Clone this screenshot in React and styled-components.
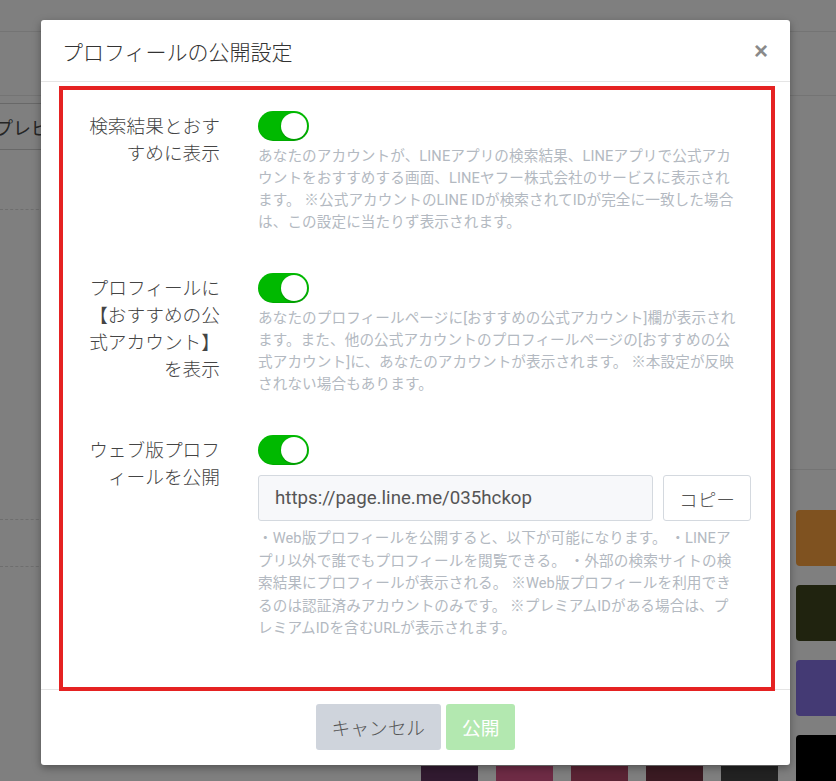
import React from "react";
import styled, { createGlobalStyle } from "styled-components";

const GlobalStyle = createGlobalStyle`
  html, body { margin: 0; padding: 0; }
  body {
    font-family: Roboto, "Noto Sans CJK JP", sans-serif;
    -webkit-font-smoothing: antialiased;
  }
  * { box-sizing: border-box; }
`;

/* ---------- dimmed page behind the modal ---------- */
const Page = styled.div`
  position: relative;
  width: 836px;
  height: 781px;
  overflow: hidden;
  background: #fff;
  display: flex;
  flex-direction: column;
`;
const TopBar = styled.div`
  height: 32px;
  flex-shrink: 0;
  border-bottom: 1px solid #e8e8e8;
`;
const SubBar = styled.div`
  height: 64px;
  flex-shrink: 0;
  border-bottom: 1px solid #e8e8e8;
`;
const Workspace = styled.div`
  flex: 1;
  display: flex;
  min-height: 0;
`;
const LeftCol = styled.div`
  width: 100px;
  flex-shrink: 0;
  padding-top: 7px;
  display: flex;
  flex-direction: column;
`;
const PreviewTab = styled.div`
  height: 47px;
  border-top: 1px solid #d0d0d0;
  border-bottom: 1px solid #d0d0d0;
  display: flex;
  align-items: center;
  margin-left: -5px;
  font-family: "Noto Sans CJK JP", sans-serif;
  font-size: 18px;
  color: #4a4a4a;
  white-space: nowrap;
`;
const DashedBlock = styled.div`
  height: ${(p) => p.$h}px;
  flex-shrink: 0;
  border-bottom: 1px dashed #dcdcdc;
`;
const Center = styled.div`
  flex: 1;
  padding: 670px 0 0 321px;
  display: flex;
  gap: 18px;
`;
const Swatch = styled.div`
  width: 57px;
  height: 40px;
  flex-shrink: 0;
  background: ${(p) => p.$c};
`;
const RightCol = styled.div`
  width: 46px;
  flex-shrink: 0;
  display: flex;
  flex-direction: column;
`;
const RightTop = styled.div`
  height: 374px;
  flex-shrink: 0;
  border-bottom: 1px solid #e8e8e8;
`;
const RightTiles = styled.div`
  padding: 40px 0 0 6px;
  display: flex;
  flex-direction: column;
  gap: 19px;
`;
const Tile = styled.div`
  width: 60px;
  height: 56px;
  flex-shrink: 0;
  border-radius: 4px;
  background: ${(p) => p.$c};
`;

const Backdrop = styled.div`
  position: absolute;
  inset: 0;
  background: rgba(0, 0, 0, 0.5);
`;

/* ---------- modal ---------- */
const Modal = styled.div`
  position: absolute;
  top: 20px;
  left: 41px;
  width: 749px;
  background: #fff;
  border-radius: 3px;
  box-shadow: 0 3px 9px rgba(0, 0, 0, 0.35);
  display: flex;
  flex-direction: column;
`;
const Header = styled.div`
  height: 62px;
  border-bottom: 1px solid #e5e5e5;
  display: flex;
  align-items: center;
  justify-content: space-between;
  padding: 0 22px 0 21px;
`;
const Title = styled.h4`
  margin: 0;
  font-family: "Noto Sans CJK JP", sans-serif;
  font-size: 21px;
  font-weight: 300;
  color: #333;
`;
const Close = styled.button`
  border: 0;
  background: none;
  padding: 0;
  font: 700 24px "Liberation Sans", sans-serif;
  line-height: 1;
  color: #8a8a8a;
  cursor: pointer;
`;
const Body = styled.div`
  padding: 4px 15px 0 18px;
  margin-bottom: -2px;
  position: relative;
  z-index: 1;
`;
const Frame = styled.div`
  border: 4px solid #e52222;
  padding: 21px 20px 47px 0;
  display: flex;
  flex-direction: column;
  gap: 40px;
`;
const Row = styled.div`
  display: grid;
  grid-template-columns: 157px 1fr;
  column-gap: 38px;
  align-items: start;
`;
const Label = styled.div`
  font-family: "Noto Sans CJK JP", sans-serif;
  font-size: 18.7px;
  font-weight: 300;
  line-height: 27px;
  color: #444;
  text-align: right;
  white-space: nowrap;
`;
const Line = styled.span`
  display: block;
`;
const Field = styled.div`
  display: flex;
  flex-direction: column;
  align-items: stretch;
`;
const Switch = styled.button`
  width: 51px;
  height: 30px;
  border: 0;
  padding: 2px;
  border-radius: 15px;
  background: #00b900;
  box-shadow: inset 0 -1px 0 rgba(0, 0, 0, 0.08);
  display: flex;
  justify-content: ${(p) => (p.$on ? "flex-end" : "flex-start")};
  align-items: center;
  cursor: pointer;
`;
const Knob = styled.span`
  width: 26px;
  height: 26px;
  border-radius: 50%;
  background: #fff;
  box-shadow: 0 1px 2px rgba(0, 0, 0, 0.2);
`;
const Desc = styled.p`
  margin: ${(p) => p.$mt}px 0 0;
  font-family: Roboto, "Noto Sans CJK JP", sans-serif;
  font-size: 14.6px;
  letter-spacing: 0.1px;
  line-height: ${(p) => p.$lh || 22}px;
  color: #b3b9c1;
  white-space: nowrap;
`;
const UrlGroup = styled.div`
  margin-top: 10px;
  display: flex;
  gap: 10px;
`;
const UrlInput = styled.input`
  flex: 1;
  min-width: 0;
  height: 46px;
  border: 1px solid #d4d9df;
  border-radius: 3px;
  background: #f7f8fa;
  padding: 0 16px;
  font-family: Roboto, sans-serif;
  font-size: 18.7px;
  color: #555;
  outline: none;
`;
const CopyButton = styled.button`
  width: 88px;
  height: 46px;
  flex-shrink: 0;
  border: 1px solid #d4d9df;
  border-radius: 3px;
  background: #fff;
  font-family: "Noto Sans CJK JP", sans-serif;
  font-size: 18.7px;
  font-weight: 300;
  color: #555;
  cursor: pointer;
`;
const Footer = styled.div`
  border-top: 1px solid #e5e5e5;
  padding: 14px 0 15px;
  display: flex;
  justify-content: center;
  gap: 5px;
`;
const FooterButton = styled.button`
  height: 46px;
  border: 0;
  border-radius: 3px;
  padding: 0 16px;
  font-family: "Noto Sans CJK JP", sans-serif;
  font-size: 18.7px;
  font-weight: ${(p) => (p.$primary ? 400 : 300)};
  background: ${(p) => (p.$primary ? "#b3e8b0" : "#cfd4dc")};
  color: ${(p) => (p.$primary ? "#fff" : "#555")};
  cursor: pointer;
`;

const rows = [
  {
    label: ["検索結果とおす", "すめに表示"],
    desc: [
      "あなたのアカウントが、LINEアプリの検索結果、LINEアプリで公式アカ",
      "ウントをおすすめする画面、LINEヤフー株式会社のサービスに表示され",
      "ます。 ※公式アカウントのLINE IDが検索されてIDが完全に一致した場合",
      "は、この設定に当たりず表示されます。",
    ],
  },
  {
    label: ["プロフィールに", "【おすすめの公", "式アカウント】", "を表示"],
    desc: [
      "あなたのプロフィールページに[おすすめの公式アカウント]欄が表示され",
      "ます。また、他の公式アカウントのプロフィールページの[おすすめの公",
      "式アカウント]に、あなたのアカウントが表示されます。 ※本設定が反映",
      "されない場合もあります。",
    ],
  },
];

const webDesc = [
  "・Web版プロフィールを公開すると、以下が可能になります。 ・LINEア",
  "プリ以外で誰でもプロフィールを閲覧できる。 ・外部の検索サイトの検",
  "索結果にプロフィールが表示される。 ※Web版プロフィールを利用でき",
  "るのは認証済みアカウントのみです。 ※プレミアムIDがある場合は、プ",
  "レミアムIDを含むURLが表示されます。",
];

const Lines = ({ items }) => items.map((t, i) => <Line key={i}>{t}</Line>);

const Toggle = () => (
  <Switch type="button" role="switch" aria-checked="true" $on>
    <Knob />
  </Switch>
);

export default function App() {
  return (
    <>
      <GlobalStyle />
      <Page>
        <TopBar />
        <SubBar />
        <Workspace>
          <LeftCol>
            <PreviewTab>プレビュー</PreviewTab>
            <DashedBlock $h={60} />
            <DashedBlock $h={310} />
            <DashedBlock $h={47} />
          </LeftCol>
          <Center>
            {["#623460", "#dc568a", "#b44668", "#743444", "#444444"].map((c) => (
              <Swatch key={c} $c={c} />
            ))}
          </Center>
          <RightCol>
            <RightTop />
            <RightTiles>
              {["#ffa440", "#40461e", "#8874e8", "#000000"].map((c) => (
                <Tile key={c} $c={c} />
              ))}
            </RightTiles>
          </RightCol>
        </Workspace>

        <Backdrop />

        <Modal role="dialog" aria-label="プロフィールの公開設定">
          <Header>
            <Title>プロフィールの公開設定</Title>
            <Close type="button" aria-label="閉じる">×</Close>
          </Header>
          <Body>
            <Frame>
              {rows.map((r, i) => (
                <Row key={i}>
                  <Label>
                    <Lines items={r.label} />
                  </Label>
                  <Field>
                    <div>
                      <Toggle />
                    </div>
                    <Desc $mt={4}>
                      <Lines items={r.desc} />
                    </Desc>
                  </Field>
                </Row>
              ))}
              <Row>
                <Label>
                  <Lines items={["ウェブ版プロフ", "ィールを公開"]} />
                </Label>
                <Field>
                  <div>
                    <Toggle />
                  </div>
                  <UrlGroup>
                    <UrlInput readOnly value="https://page.line.me/035hckop" />
                    <CopyButton type="button">コピー</CopyButton>
                  </UrlGroup>
                  <Desc $mt={6} $lh={22.5}>
                    <Lines items={webDesc} />
                  </Desc>
                </Field>
              </Row>
            </Frame>
          </Body>
          <Footer>
            <FooterButton type="button">キャンセル</FooterButton>
            <FooterButton type="button" $primary>
              公開
            </FooterButton>
          </Footer>
        </Modal>
      </Page>
    </>
  );
}
